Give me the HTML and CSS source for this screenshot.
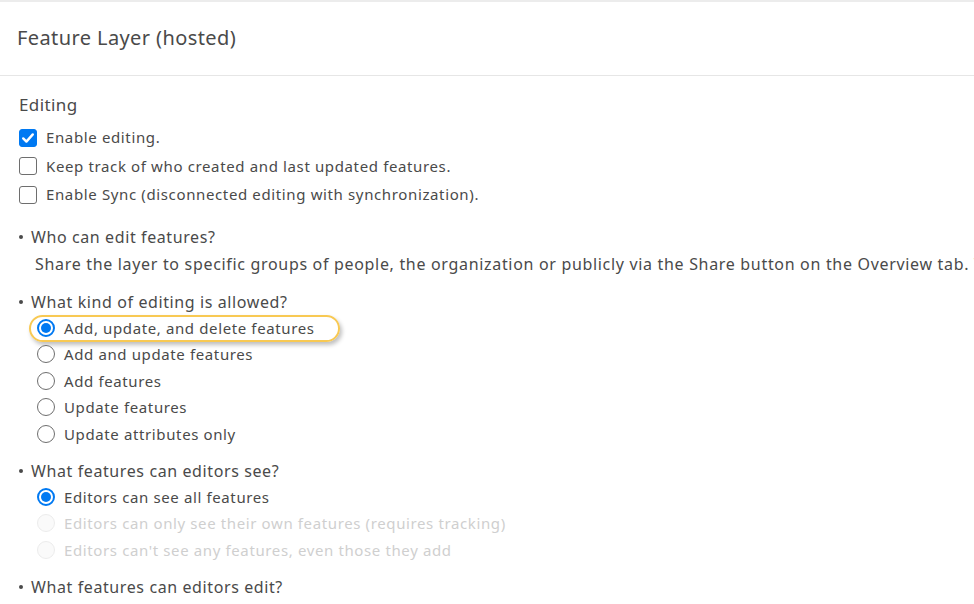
FILE: index.html
```html
<!DOCTYPE html>
<html lang="en">
<head>
<meta charset="utf-8">
<title>Feature Layer (hosted)</title>
<link rel="stylesheet" href="styles.css">
</head>
<body>
<div class="topband"></div>
<header class="header"><h1 class="title">Feature Layer (hosted)</h1></header>
<main class="content">
  <h2 class="section-title">Editing</h2>
  <div class="checks">
    <label class="check"><span class="box checked"><svg viewBox="0 0 18 18" width="18" height="18"><path d="M4.2 9.4 L7.4 12.6 L13.8 5.4" fill="none" stroke="#fff" stroke-width="2.4" stroke-linecap="round" stroke-linejoin="round"/></svg></span><span>Enable editing.</span></label>
    <label class="check"><span class="box"></span><span>Keep track of who created and last updated features.</span></label>
    <label class="check"><span class="box"></span><span>Enable Sync (disconnected editing with synchronization).</span></label>
  </div>

  <div class="q q-first">
    <div class="q-title"><span class="dot"></span>Who can edit features?</div>
    <p class="q-text">Share the layer to specific groups of people, the organization or publicly via the Share button on the Overview tab. The</p>
  </div>

  <div class="q q-after-text">
    <div class="q-title"><span class="dot"></span>What kind of editing is allowed?</div>
    <div class="radios">
      <label class="radio highlighted"><span class="circle on"></span><span>Add, update, and delete features</span></label>
      <label class="radio"><span class="circle"></span><span>Add and update features</span></label>
      <label class="radio"><span class="circle"></span><span>Add features</span></label>
      <label class="radio"><span class="circle"></span><span>Update features</span></label>
      <label class="radio"><span class="circle"></span><span>Update attributes only</span></label>
    </div>
  </div>

  <div class="q q-after-radios">
    <div class="q-title"><span class="dot"></span>What features can editors see?</div>
    <div class="radios">
      <label class="radio"><span class="circle on"></span><span>Editors can see all features</span></label>
      <label class="radio disabled"><span class="circle"></span><span>Editors can only see their own features (requires tracking)</span></label>
      <label class="radio disabled"><span class="circle"></span><span>Editors can't see any features, even those they add</span></label>
    </div>
  </div>

  <div class="q q-after-radios">
    <div class="q-title"><span class="dot"></span>What features can editors edit?</div>
  </div>
</main>
</body>
</html>
```
FILE: styles.css
```css
* { box-sizing: border-box; }
html, body { margin: 0; padding: 0; }
body {
  width: 974px;
  height: 604px;
  overflow: hidden;
  background: #fff;
  color: #4a4a4a;
  font-family: "Noto Sans", sans-serif;
  white-space: nowrap;
}
.topband { height: 2px; background: #ececec; }
.header {
  height: 74px;
  border-bottom: 1px solid #e6e6e6;
  display: flex;
  align-items: center;
  padding-left: 17px;
  padding-bottom: 1px;
}
.title { margin: 0; font-size: 20px; font-weight: 400; color: #4a4a4a; line-height: 24px; letter-spacing: 0.4px; }
.content { padding: 18px 0 0 19px; }
.section-title { margin: 0; font-size: 17px; font-weight: 400; height: 22px; line-height: 22px; letter-spacing: 0.4px; }
.checks { display: flex; flex-direction: column; gap: 9.5px; margin-top: 12px; }
.check { display: flex; align-items: center; gap: 9px; font-size: 15px; height: 19px; line-height: 19px; letter-spacing: 0.63px; }
.box {
  width: 18px; height: 18px; border: 1px solid #6e6e6e; border-radius: 3px;
  display: inline-flex; flex: none; background: #fff;
}
.box.checked { background: #0079f2; border-color: #0079f2; }
.box.checked svg { margin: -1px; }
.q-first { margin-top: 21.5px; }
.q-after-text { margin-top: 16px; }
.q-after-radios { margin-top: 12.5px; }
.q-title { display: flex; align-items: center; font-size: 16px; height: 22px; line-height: 22px; letter-spacing: 0.6px; }
.dot { width: 4px; height: 4px; border-radius: 50%; background: #4a4a4a; margin-right: 8px; }
.q-text { margin: 5px 0 0 16px; font-size: 16px; height: 22px; line-height: 22px; letter-spacing: 0.68px; }
.radios { display: flex; flex-direction: column; margin-top: 2px; margin-left: 18px; }
.radio { display: flex; align-items: center; gap: 9px; font-size: 15px; height: 26.5px; line-height: 20px; position: relative; width: max-content; letter-spacing: 0.62px; }
.circle {
  width: 18px; height: 18px; border: 1px solid #6e6e6e; border-radius: 50%;
  flex: none; background: #fff; display: inline-block; position: relative;
}
.circle.on { border: 2px solid #0079f2; }
.circle.on::after {
  content: ""; position: absolute; left: 2px; top: 2px; width: 10px; height: 10px;
  border-radius: 50%; background: #0079f2;
}
.radio.disabled { color: #cfcfcf; }
.radio.disabled .circle { border-color: #ececec; background: #fafafa; }
.radio.highlighted::before {
  content: ""; position: absolute; left: -8px; right: -25px; top: 0; bottom: -1px;
  border: 2px solid #f8c953; border-radius: 16px;
  box-shadow: 2px 3px 4px rgba(0,0,0,0.25);
}
```
